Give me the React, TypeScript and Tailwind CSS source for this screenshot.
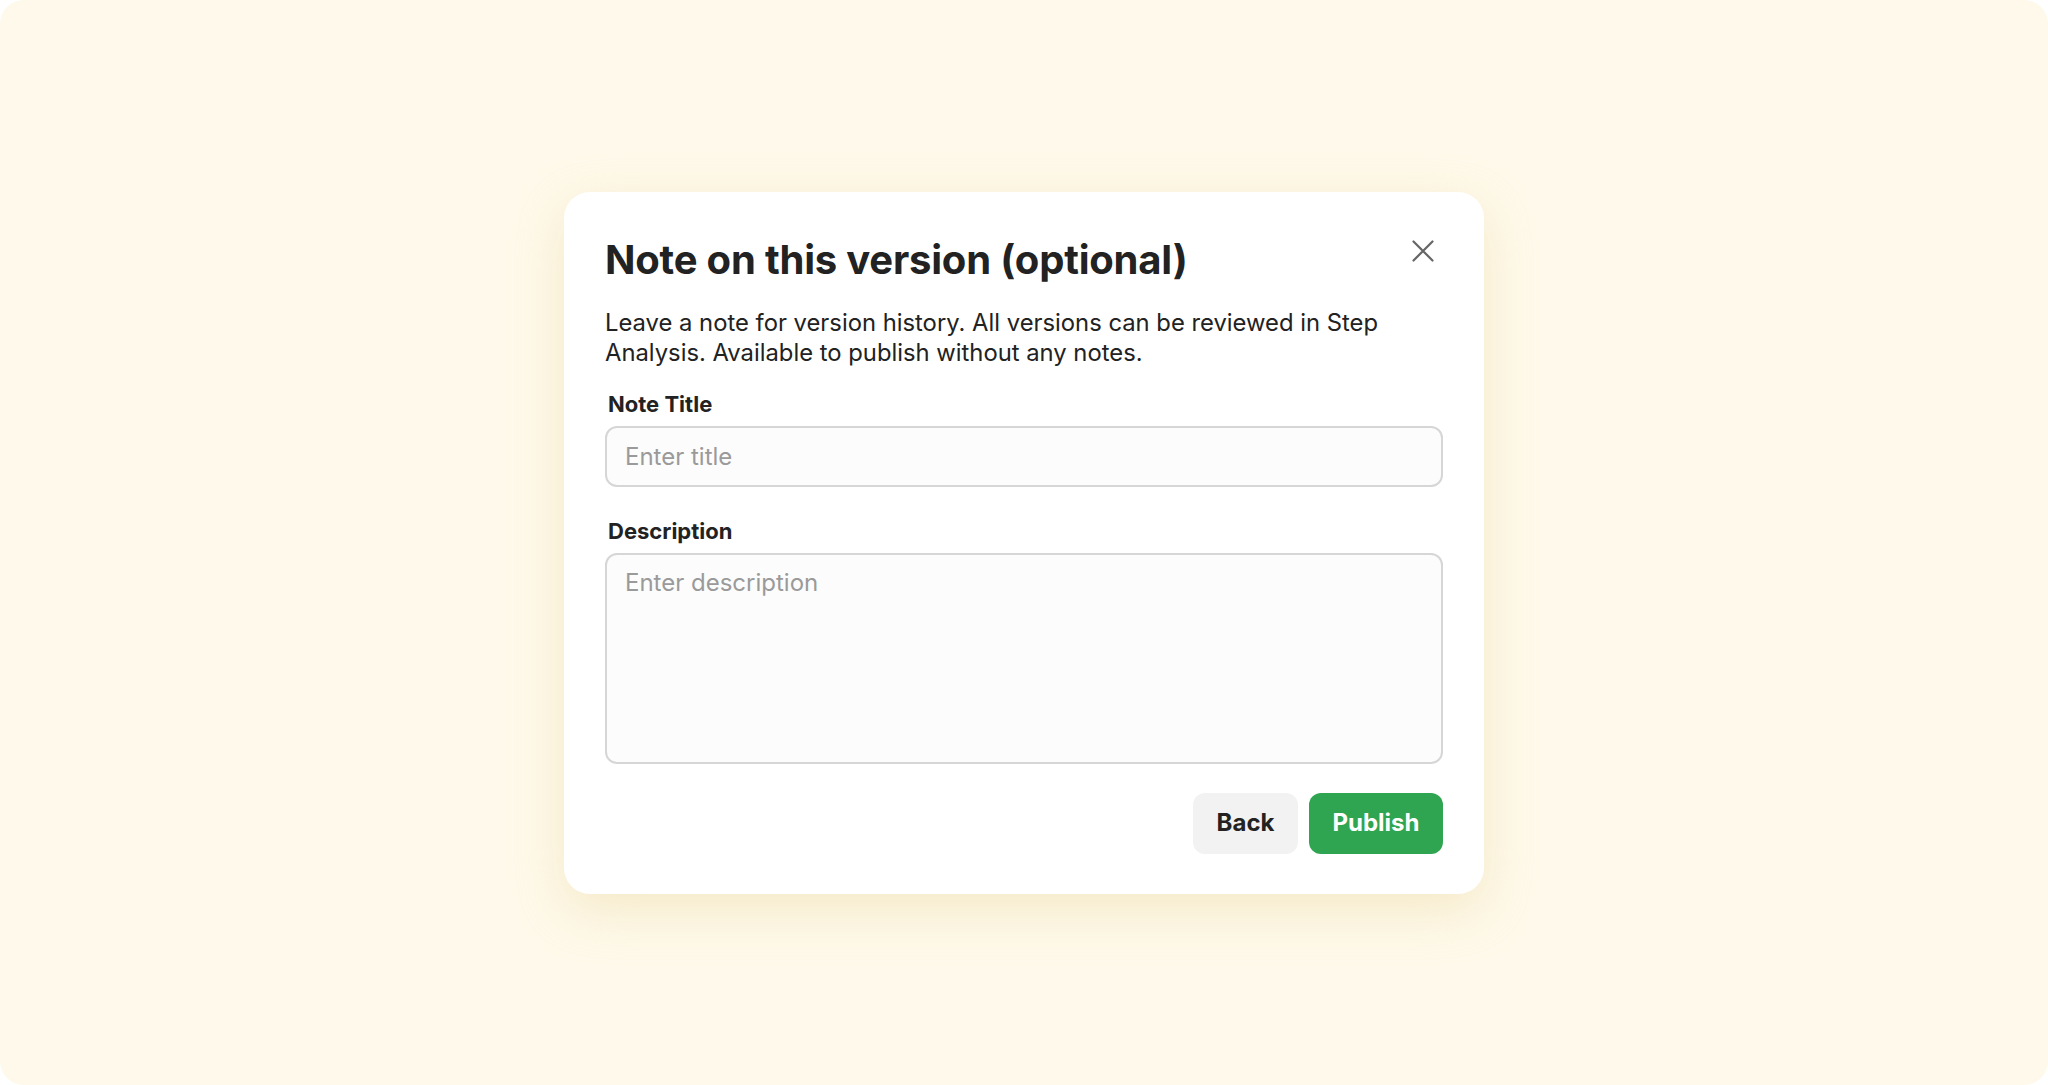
import { useState } from "react";

export default function App() {
  const [title, setTitle] = useState("");
  const [description, setDescription] = useState("");

  return (
    <div className="h-[1085px] w-full bg-white" style={{ fontFamily: "Inter, 'Noto Sans', sans-serif" }}>
      <div className="flex h-full w-full items-center justify-center rounded-[24px] bg-[#fef9ea]">
        <div className="w-[920px] rounded-[26px] bg-white px-[41px] pb-[40px] pt-[44px] shadow-[0_16px_50px_rgba(236,214,160,0.45)]">
          <div className="flex items-start justify-between">
            <h2 className="text-[40px] font-bold leading-[48px] tracking-[-0.2px] text-[#222]">
              Note on this version (optional)
            </h2>
            <button type="button" aria-label="Close" className="mr-[8px] mt-[3px] flex h-[24px] w-[24px] items-center justify-center text-[#666]">
              <svg width="22" height="22" viewBox="0 0 22 22" fill="none" stroke="currentColor" strokeWidth="2.2" strokeLinecap="round">
                <path d="M1.5 1.5 L20.5 20.5 M20.5 1.5 L1.5 20.5" />
              </svg>
            </button>
          </div>
          <p className="mt-[24px] text-[23.8px] leading-[30px] text-[#222]">
            Leave a note for version history. All versions can be reviewed in Step Analysis. Available to publish without any notes.
          </p>

          <label htmlFor="noteTitle" className="mt-[22px] block pl-[3px] text-[22px] font-bold leading-[28px] text-[#222]">
            Note Title
          </label>
          <input
            id="noteTitle"
            type="text"
            value={title}
            onChange={(event) => setTitle(event.target.value)}
            placeholder="Enter title"
            className="mt-[8px] h-[61px] w-full rounded-[12px] border-2 border-[#d6d6d6] bg-[#fcfcfc] px-[18px] text-[24px] text-[#222] outline-none placeholder:text-[#9a9a9a]"
          />

          <label htmlFor="noteDescription" className="mt-[30px] block pl-[3px] text-[22px] font-bold leading-[28px] text-[#222]">
            Description
          </label>
          <textarea
            id="noteDescription"
            value={description}
            onChange={(event) => setDescription(event.target.value)}
            placeholder="Enter description"
            className="mt-[8px] block h-[211px] w-full resize-none rounded-[12px] border-2 border-[#d6d6d6] bg-[#fcfcfc] px-[18px] pt-[12px] text-[24px] leading-[32px] text-[#222] outline-none placeholder:text-[#9a9a9a]"
          />

          <div className="mt-[29px] flex justify-end gap-[11px]">
            <button type="button" className="h-[61px] w-[105px] rounded-[12px] bg-[#f2f2f2] text-[24px] font-bold text-[#222]">
              Back
            </button>
            <button type="button" className="h-[61px] w-[134px] rounded-[12px] bg-[#2fa552] text-[24px] font-bold text-white">
              Publish
            </button>
          </div>
        </div>
      </div>
    </div>
  );
}
